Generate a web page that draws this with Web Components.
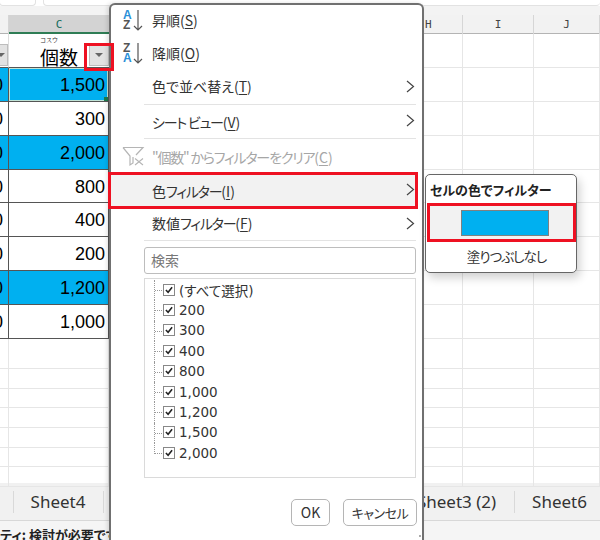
<!DOCTYPE html>
<html lang="ja">
<head>
<meta charset="utf-8">
<style>
    html, body { margin: 0; padding: 0; }
    body { width: 600px; height: 540px; overflow: hidden; font-family: "Noto Sans CJK JP", sans-serif; background: #fff; }
</style>
</head>
<body>
<excel-window>
    <filter-menu></filter-menu>
</excel-window>
<script>
const FONT = `"Noto Sans CJK JP", "Noto Sans", sans-serif`;
const RED = "#ee1122";

const sheetTemplate = document.createElement('template');
sheetTemplate.innerHTML = `
    <style>
        :host { display: block; position: relative; width: 600px; height: 540px; overflow: hidden; background: #fff; font-family: ${FONT}; color: #111; }
        .top { height: 15px; background: linear-gradient(#fff 0 6px, #f3f3f3 6px); display: flex; gap: 7px; }
        .top i { display: block; width: 35px; height: 5px; background: #fff; border-radius: 0 0 4px 4px; border: 1px solid #e2e2e2; border-top: 0; }
        .top i:first-child { margin-left: -1px; }
        .top i:last-child { flex: 1; border-left: 1px solid #e2e2e2; border-right: 0; }
        .heads { height: 18px; display: grid; grid-template-columns: 9px 100px 315px 39px 71px 66px; background: #f2f2f2; border-bottom: 1px solid #b4b4b4; font: 11px "DejaVu Sans Mono", monospace; color: #444; text-align: center; line-height: 19px; }
        .heads span { border-right: 1px solid #d6d6d6; box-sizing: border-box; }
        .heads .on { background: #d3d3d3; color: #136c5b; border-right: 0; box-shadow: inset 0 -2px #2f7d55; height: 19px; }
        .heads .h { text-align: left; padding-left: 1px; }
        .grid { height: 449px; display: grid; grid-template-columns: 9px 100px 315px 39px 71px 66px; grid-template-rows: repeat(9, 33.875px) 30px repeat(6, 19.7px); }
        .grid > div { box-sizing: border-box; border-right: 1px solid #e6e6e6; border-bottom: 1px solid #e6e6e6; }
        .tabs { height: 38px; background: #f1f1f1; border-bottom: 1px solid #d8d8d8; box-sizing: border-box; font: 17px/22px "Noto Sans", sans-serif; color: #333; display: flex; align-items: center; padding-left: 13px; }
        .tabs b { width: 1px; height: 22px; background: #d9d9d9; flex: none; }
        .tabs span { white-space: nowrap; }
        .tabs .s4 { width: 88px; text-align: center; margin-right: 1px; }
        .tabs .s3 { margin-left: auto; margin-right: 18px; }
        .tabs .s6 { margin-left: 17px; margin-right: 13px; }
        .status { height: 19px; background: #f5f5f5; font-size: 13px; font-weight: 700; line-height: 27px; color: #222; white-space: nowrap; overflow: hidden; font-feature-settings: "palt" 1; }
        .mark { position: absolute; left: 84px; top: 43px; width: 30px; height: 28px; box-sizing: border-box; border: 3px solid ${RED}; z-index: 5; }
    </style>
    <div class="top"><i></i><i></i></div>
    <div class="heads">
        <span></span><span class="on">C</span><span></span><span class="h">H</span><span>I</span><span>J</span>
    </div>
    <div class="grid" id="grid"></div>
    <div class="tabs">
        <b></b><span class="s4">Sheet4</span><b></b>
        <span class="s3">Sheet3 (2)</span><b></b><span class="s6">Sheet6</span>
    </div>
    <div class="status">ティ: 検討が必要です</div>
    <slot></slot>
    <i class="mark"></i>
`;

const dataRows = [
    ["1,500", true], ["300", false], ["2,000", true], ["800", false],
    ["400", false], ["200", false], ["1,200", true], ["1,000", false]
];

class ExcelWindow extends HTMLElement {
    constructor() {
        super();
        this.attachShadow({mode: 'open'});
        this.shadowRoot.appendChild(sheetTemplate.content.cloneNode(true));
        const grid = this.shadowRoot.getElementById('grid');
        const plain = () => '<div></div><div></div><div></div><div></div>';
        let html = `<sheet-cell edge="a" head></sheet-cell><sheet-cell header="個数"></sheet-cell>` + plain();
        dataRows.forEach(([val, blue], i) => {
            html += `<sheet-cell edge="a"${blue ? ' blue' : ''}></sheet-cell><sheet-cell value="${val}"${blue ? ' blue' : ''}${i === 0 ? ' selected' : ''}></sheet-cell>` + plain();
        });
        for (let i = 0; i < 7; i++) {
            html += '<div></div><div></div>' + plain();
        }
        grid.innerHTML = html;
    }
}

const cellTemplate = document.createElement('template');
cellTemplate.innerHTML = `
    <style>
        :host { display: block; box-sizing: border-box; border-right: 1px solid #555; border-bottom: 1px solid #555; position: relative; font: 18px/35px "Liberation Sans", sans-serif; color: #000; text-align: right; padding-right: 3px; overflow: hidden; }
        :host([blue]) { background: #00b0f0; }
        :host([edge]) { padding: 0; text-align: left; text-indent: -7px; }
        :host([head]) { border-right-color: #ddd; }
        :host([header]) { border-right: 0; overflow: visible; }
        :host([selected]) { box-shadow: inset 0 0 0 1px #bfe3d6; }
        :host([selected])::after { content: ""; position: absolute; right: 0; bottom: 0; width: 4px; height: 4px; background: #1d7a4c; }
        .hd { position: absolute; left: 31px; top: 12px; font: 19px/22px ${FONT}; }
        .ruby { position: absolute; left: 31px; top: 3px; font: 6px/6px ${FONT}; color: #333; }
        .btn { position: absolute; left: 80px; top: 10px; width: 20px; height: 22px; background: #e2e2e2; border: 1px solid #bdbdbd; box-sizing: border-box; }
        .btn::after { content: ""; position: absolute; left: 5px; top: 8px; border: 4px solid transparent; border-top: 4px solid #666; border-bottom: 0; }
        .mini { position: absolute; left: -10px; top: 10px; width: 18px; height: 22px; background: #e2e2e2; border: 1px solid #bdbdbd; box-sizing: border-box; }
        .mini::after { content: ""; position: absolute; left: 6px; top: 8px; border: 4px solid transparent; border-top: 4px solid #666; border-bottom: 0; }
    </style>
    <span id="c"></span>
`;

class SheetCell extends HTMLElement {
    constructor() {
        super();
        this.attachShadow({mode: 'open'});
        this.shadowRoot.appendChild(cellTemplate.content.cloneNode(true));
    }
    connectedCallback() {
        const c = this.shadowRoot.getElementById('c');
        if (this.hasAttribute('header')) {
            c.innerHTML = `<span class="ruby">コスウ</span><span class="hd">${this.getAttribute('header')}</span><span class="btn"></span>`;
        } else if (this.hasAttribute('head')) {
            c.innerHTML = `<span class="mini"></span>`;
        } else if (this.hasAttribute('edge')) {
            c.textContent = '0';
        } else {
            c.textContent = this.getAttribute('value') || '';
        }
    }
}

const menuTemplate = document.createElement('template');
menuTemplate.innerHTML = `
    <style>
        :host { display: block; position: absolute; left: 109px; top: 3px; width: 315px; height: 540px; box-sizing: border-box; background: #fff; border: 2px solid #707070; border-bottom: 0; border-radius: 6px 6px 0 0; box-shadow: -2px 0 4px rgba(0,0,0,.12); font-family: ${FONT}; font-size: 14px; color: #333; font-feature-settings: "palt" 1; }
        hr { border: 0; border-top: 1px solid #e3e3e3; margin: 0 6px 0 33px; }
        .search { display: block; margin: 6px 6px 0 33px; height: 27px; box-sizing: border-box; border: 1px solid #bdbdbd; border-radius: 3px; padding-left: 6px; line-height: 25px; color: #777; }
        .tree { margin: 4px 6px 0 33px; height: 200px; box-sizing: border-box; border: 1px solid #dadada; padding-top: 1px; }
        .btns { display: flex; justify-content: flex-end; gap: 13px; margin: 21px 5px 0 0; }
        .btns span { height: 27px; box-sizing: border-box; border: 1px solid #b5b5b5; border-radius: 5px; line-height: 25px; text-align: center; font-size: 14px; }
        .btns .cancel { width: 74px; font-size: 13px; letter-spacing: -.5px; }
        .grip { position: absolute; right: 0; bottom: 0; }
    </style>
    <menu-row label="昇順(<u>S</u>)" icon="az"></menu-row>
    <menu-row label="降順(<u>O</u>)" icon="za"></menu-row>
    <menu-row label="色で並べ替え(<u>T</u>)" arrow></menu-row>
    <hr>
    <menu-row label="<span class='k'>シート ビュー</span>(<u>V</u>)" arrow level></menu-row>
    <hr>
    <menu-row label="<span class='k'>&quot;個数&quot; からフィルターをクリア</span>(<u>C</u>)" icon="clear" disabled></menu-row>
    <menu-row label="色<span class='k'>フィルター</span>(<u>I</u>)" arrow active level></menu-row>
    <menu-row label="数値<span class='k'>フィルター</span>(<u>F</u>)" arrow short></menu-row>
    <hr>
    <span class="search">検索</span>
    <div class="tree" id="tree"></div>
    <div class="btns"><span style="width:39px">OK</span><span class="cancel">キャンセル</span></div>
    <svg class="grip" width="10" height="8" viewBox="0 0 10 8"><path d="M7 0h2v2H7zM7 5h2v2H7zM2 5h2v2H2z" fill="#aaa"/></svg>
    <color-popup></color-popup>
`;

class FilterMenu extends HTMLElement {
    constructor() {
        super();
        this.attachShadow({mode: 'open'});
        this.shadowRoot.appendChild(menuTemplate.content.cloneNode(true));
        const items = ["(すべて選択)", "200", "300", "400", "800", "1,000", "1,200", "1,500", "2,000"];
        this.shadowRoot.getElementById('tree').innerHTML = items
            .map((t, i) => `<tree-item${i === items.length - 1 ? ' last' : ''}>${t}</tree-item>`).join('');
    }
}

const rowTemplate = document.createElement('template');
rowTemplate.innerHTML = `
    <style>
        :host { display: flex; align-items: center; height: 33px; position: relative; padding: 0 0 3px 41px; box-sizing: border-box; }
        :host([level]) { padding-bottom: 0; }
        :host([disabled]) { color: #a6a6a6; padding: 3px 0 0 41px; }
        :host([active]) { background: #f2f2f2; outline: 3px solid ${RED}; outline-offset: -3px; margin-left: -3px; padding-left: 44px; margin-right: 4px; height: 37px; }
        :host([short]) { height: 31px; }
        u { text-underline-offset: 2px; }
        .k { letter-spacing: -1.2px; }
        svg { position: absolute; }
        .ic { left: 11px; top: 4px; }
        .ar { right: 7px; top: calc(50% - 8px); }
        :host([active]) .ar { right: 3px; }
    </style>
    <span id="t"></span>
`;

const arrowDown = `<path d="M16 1v20M12 17l4 4 4-4" fill="none" stroke="#555" stroke-width="1.2"/>`;
const letter = (ch, y, fill) => `<text x="1" y="${y}" font-size="12" font-weight="700" fill="${fill}" font-family="Liberation Sans">${ch}</text>`;
const rowIcons = {
    az: `<svg class="ic" width="26" height="26" viewBox="0 0 26 26">${letter('A', 10, '#2b8fd8')}${letter('Z', 20, '#555')}${arrowDown}</svg>`,
    za: `<svg class="ic" width="26" height="26" viewBox="0 0 26 26">${letter('Z', 10, '#555')}${letter('A', 20, '#2b8fd8')}${arrowDown}</svg>`,
    clear: `<svg class="ic" width="26" height="26" viewBox="0 0 26 26"><path d="M1 4.5H21L14 12M1 4.5L8 13V22L11 20V14" fill="none" stroke="#b5b5b5" stroke-width="1.2"/><path d="M13 15.5l8 6.5M21 15.5l-8 6.5" stroke="#b5b5b5" stroke-width="1.1"/></svg>`
};

class MenuRow extends HTMLElement {
    constructor() {
        super();
        this.attachShadow({mode: 'open'});
        this.shadowRoot.appendChild(rowTemplate.content.cloneNode(true));
    }
    connectedCallback() {
        this.shadowRoot.getElementById('t').innerHTML = this.getAttribute('label');
        const icon = this.getAttribute('icon');
        if (icon) this.shadowRoot.appendChild(this.svg(rowIcons[icon]));
        if (this.hasAttribute('arrow')) {
            this.shadowRoot.appendChild(this.svg(`<svg class="ar" width="9" height="13" viewBox="0 0 9 13"><path d="M1 1l6.5 5.5L1 12" fill="none" stroke="#444" stroke-width="1.2"/></svg>`));
        }
    }
    svg(markup) {
        const t = document.createElement('template');
        t.innerHTML = markup;
        return t.content.firstChild;
    }
}

const treeTemplate = document.createElement('template');
treeTemplate.innerHTML = `
    <style>
        :host { display: flex; align-items: center; height: 20.4px; position: relative; padding: 0 0 1px 18px; box-sizing: border-box; font-size: 14px; color: #333; }
        .l { position: absolute; left: 9px; top: 0; bottom: 0; width: 9px; border-left: 1px dotted #999; }
        .l::after { content: ""; position: absolute; left: 0; top: 10px; width: 9px; border-top: 1px dotted #999; }
        :host([last]) .l { bottom: 10px; }
        .c { width: 10px; height: 10px; border: 1px solid #888; margin-right: 4px; box-sizing: content-box; position: relative; flex: none; background: #fff; }
        svg { position: absolute; left: 1px; top: 1px; }
        span { font-family: "DejaVu Sans", ${FONT}; font-size: 13.5px; }
    </style>
    <i class="l"></i>
    <i class="c"><svg width="8" height="8" viewBox="0 0 9 9"><path d="M1 4.5l2.5 2.5 4.5-5.5" fill="none" stroke="#222" stroke-width="1.8"/></svg></i>
    <span><slot></slot></span>
`;

class TreeItem extends HTMLElement {
    constructor() {
        super();
        this.attachShadow({mode: 'open'});
        this.shadowRoot.appendChild(treeTemplate.content.cloneNode(true));
    }
}

const popupTemplate = document.createElement('template');
popupTemplate.innerHTML = `
    <style>
        :host { display: block; position: absolute; left: 314px; top: 169px; width: 152px; height: 99px; box-sizing: border-box; background: #fff; border: 1px solid #666; border-radius: 5px; box-shadow: 3px 5px 10px rgba(0,0,0,.18); font-family: ${FONT}; }
        .title { font-weight: 700; font-size: 13px; color: #222; line-height: 30px; height: 28px; padding-left: 4px; }
        .pick { margin-left: 1px; height: 39px; box-sizing: border-box; background: #f2f2f2; border: 3px solid ${RED}; display: flex; align-items: center; justify-content: center; padding-left: 6px; }
        .pick i { display: block; width: 88px; height: 26px; background: #00b0f0; border: 1px solid #808080; box-sizing: border-box; }
        .none { text-align: center; font-size: 13.5px; letter-spacing: -1px; color: #333; line-height: 28px; padding-left: 11px; }
    </style>
    <div class="title">セルの色でフィルター</div>
    <div class="pick"><i></i></div>
    <div class="none">塗りつぶしなし</div>
`;

class ColorPopup extends HTMLElement {
    constructor() {
        super();
        this.attachShadow({mode: 'open'});
        this.shadowRoot.appendChild(popupTemplate.content.cloneNode(true));
    }
}

customElements.define('sheet-cell', SheetCell);
customElements.define('excel-window', ExcelWindow);
customElements.define('menu-row', MenuRow);
customElements.define('tree-item', TreeItem);
customElements.define('color-popup', ColorPopup);
customElements.define('filter-menu', FilterMenu);
</script>
</body>
</html>
